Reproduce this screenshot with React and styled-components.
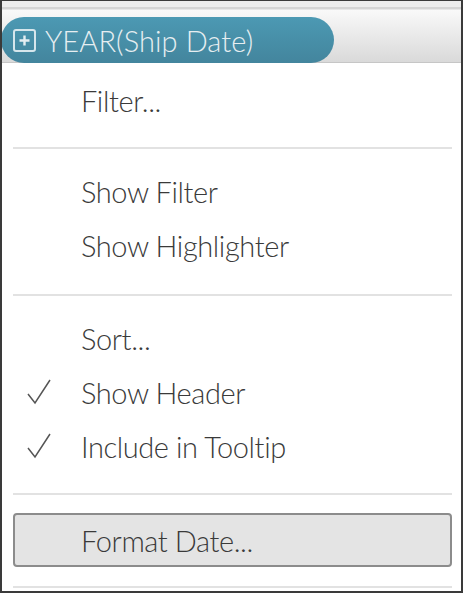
import React from 'react';
import styled, { createGlobalStyle } from 'styled-components';

const GlobalStyle = createGlobalStyle`
    html, body {
        margin: 0;
        padding: 0;
        background: #ffffff;
    }
    body {
        font-family: Lato, "Open Sans", sans-serif;
    }
`;

const groups = [
    { items: [{ label: 'Filter...' }], top: 10, bottom: 20 },
    { items: [{ label: 'Show Filter' }, { label: 'Show Highlighter' }], top: 15, bottom: 22 },
    {
        items: [
            { label: 'Sort...' },
            { label: 'Show Header', checked: true },
            { label: 'Include in Tooltip', checked: true },
        ],
        top: 15,
        bottom: 20,
    },
];

function Check() {
    return (
        <svg width="26" height="28" viewBox="0 0 26 28">
            <path d="M2 16 L9 25 L24 2" fill="none" stroke="#555" strokeWidth="1.5" strokeLinejoin="miter" />
        </svg>
    );
}

function PlusBox() {
    return (
        <svg width="23" height="23" viewBox="0 0 23 23">
            <rect x="1" y="1" width="21" height="21" rx="2" fill="none" stroke="#d6e6ec" strokeWidth="2" />
            <path d="M11.5 6.5 V16.5 M6.5 11.5 H16.5" stroke="#e4eef2" strokeWidth="2.4" />
        </svg>
    );
}

function App() {
    return (
        <>
            <GlobalStyle />
            <Frame>
                <Header>
                    <Pill>
                        <PlusBox />
                        <span>YEAR(Ship Date)</span>
                    </Pill>
                </Header>
                {groups.map((group, i) => (
                    <React.Fragment key={i}>
                        <Group $top={group.top} $bottom={group.bottom}>
                            {group.items.map((item) => (
                                <Row key={item.label}>
                                    <CheckSlot>{item.checked && <Check />}</CheckSlot>
                                    {item.label}
                                </Row>
                            ))}
                        </Group>
                        <Separator />
                    </React.Fragment>
                ))}
                <Group $top={18} $bottom={19}>
                    <FormatButton>
                        <CheckSlot />
                        Format Date...
                    </FormatButton>
                </Group>
                <Separator />
            </Frame>
        </>
    );
}

export default App;

const Frame = styled.div`
    width: 463px;
    height: 593px;
    box-sizing: border-box;
    border: 2px solid #3a3a3a;
    border-top-width: 1px;
    background: #ffffff;
    overflow: hidden;
    display: flex;
    flex-direction: column;
`;

const Header = styled.div`
    height: 62px;
    flex-shrink: 0;
    box-sizing: border-box;
    border-top: 6px solid #ececec;
    display: flex;
    align-items: flex-end;
    background: linear-gradient(to bottom, #d4d4d4 0px, #d4d4d4 2px, #f9f9f9 3px, #dadada 54px);
    border-bottom: 1px solid #c6c6c6;
`;

const Pill = styled.div`
    height: 46px;
    width: 333px;
    margin-left: -1px;
    margin-bottom: -1px;
    box-sizing: border-box;
    border-radius: 23px;
    background: linear-gradient(to bottom, #4c99b3, #43859d);
    display: flex;
    align-items: center;
    gap: 9px;
    padding-left: 12px;
    color: #e6eef1;
    font-size: 29px;
    font-weight: 300;
    letter-spacing: 0.1px;
`;

const Group = styled.div`
    padding: ${(p) => p.$top}px 0 ${(p) => p.$bottom}px;
    display: flex;
    flex-direction: column;
`;

const Row = styled.div`
    height: 54px;
    display: flex;
    align-items: center;
    font-size: 29px;
    font-weight: 300;
    color: #3a3a3a;
    letter-spacing: -0.4px;
`;

const CheckSlot = styled.div`
    width: 79px;
    padding-left: 24px;
    box-sizing: border-box;
    display: flex;
    align-items: center;
    flex-shrink: 0;
`;

const Separator = styled.div`
    height: 2px;
    margin: 0 9px 0 11px;
    background: #e2e2e2;
    flex-shrink: 0;
`;

const FormatButton = styled.div`
    height: 54px;
    margin: 0 9px 0 11px;
    box-sizing: border-box;
    border: 2px solid #8c8c8c;
    border-radius: 4px;
    background: #e4e4e4;
    display: flex;
    align-items: center;
    font-size: 29px;
    font-weight: 300;
    color: #3a3a3a;
    letter-spacing: -0.4px;

    ${CheckSlot} {
        width: 66px;
    }
`;
